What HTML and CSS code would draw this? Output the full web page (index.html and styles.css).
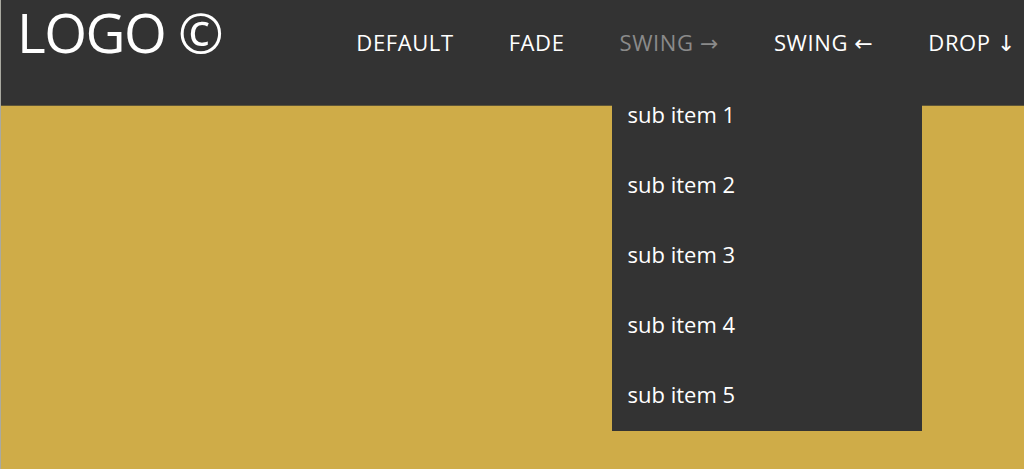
FILE: index.html
```html
<!DOCTYPE html>
<html>
<head>
<meta charset="utf-8">
<link rel="stylesheet" href="styles.css">
</head>
<body>
<header class="header">
  <div class="logo">LOGO ©</div>
  <nav class="nav">
    <ul class="menu">
      <li class="menu-item">DEFAULT</li>
      <li class="menu-item">FADE</li>
      <li class="menu-item menu-item--active">SWING →
        <ul class="dropdown">
          <li class="dropdown-item">sub item 1</li>
          <li class="dropdown-item">sub item 2</li>
          <li class="dropdown-item">sub item 3</li>
          <li class="dropdown-item">sub item 4</li>
          <li class="dropdown-item">sub item 5</li>
        </ul>
      </li>
      <li class="menu-item">SWING ←</li>
      <li class="menu-item">DROP ↓</li>
    </ul>
  </nav>
</header>
<main class="content"></main>
</body>
</html>
```
FILE: styles.css
```css
* { box-sizing: border-box; }
html, body { margin: 0; padding: 0; height: 100%; }
body {
  background: #cfac48;
  font-family: "Open Sans", "DejaVu Sans", sans-serif;
  border-left: 1px solid #a9a9a0;
  overflow: hidden;
}
.header {
  height: 106px;
  background: #333333;
  display: flex;
  align-items: flex-start;
  padding-left: 16px;
  border-bottom: 1px solid #5e5537;
}
.logo {
  color: #fff;
  font-size: 55px;
  line-height: 62px;
  padding-top: 1px;
  font-weight: 400;
  letter-spacing: -1.5px;
  white-space: nowrap;
}
.nav { margin-left: auto; padding-right: 8px; }
.menu {
  list-style: none;
  margin: 0;
  padding: 0;
  display: flex;
}
.menu-item {
  position: relative;
  color: #fff;
  font-size: 22px;
  line-height: 30px;
  padding-top: 27px;
  margin-left: 55px;
  letter-spacing: 0.6px;
  white-space: nowrap;
}
.menu-item--active { color: #8a8a8a; }
.dropdown {
  position: absolute;
  top: 81px;
  left: -7px;
  width: 310px;
  margin: 0;
  padding: 0;
  list-style: none;
  background: #333333;
}
.dropdown-item {
  color: #fff;
  height: 70px;
  line-height: 66px;
  padding-left: 15px;
  font-size: 22px;
  letter-spacing: 0;
}
```
